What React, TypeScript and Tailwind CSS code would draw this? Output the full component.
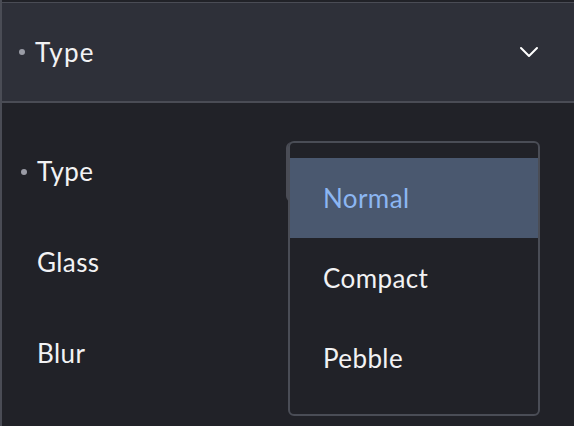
import { ChevronDown } from 'lucide-react';

const font = { fontFamily: 'Lato, "Noto Sans", sans-serif' };

const Dot = () => <span className="w-[6px] h-[6px] rounded-full bg-[#9a9ca6] mr-[10px]" />;

const Row = ({ label, dot }: { label: string; dot?: boolean }) => (
  <div className="h-[91px] flex items-center pl-[19px]">
    {dot ? <Dot /> : <span className="w-[16px]" />}
    <span className="text-[26px] tracking-[0.4px] text-[#f2f2f4]">{label}</span>
  </div>
);

export default function App() {
  const options = ['Normal', 'Compact', 'Pebble'];
  return (
    <div className="w-[574px] h-[426px] bg-[#212228] overflow-hidden relative" style={font}>
      <div className="h-full pt-[2px] border-l-2 border-[#4a4c55]">
        {/* Section header */}
        <div className="h-[101px] bg-[#2e3039] border-t border-b-2 border-[#4a4c55] flex items-center pl-[17px] pr-[29px]">
          <Dot />
          <span className="text-[26px] tracking-[1.2px] text-[#f2f2f4]">Type</span>
          <ChevronDown className="ml-auto text-white w-[32px] h-[32px]" strokeWidth={1.5} />
        </div>

        {/* Fields */}
        <div className="pt-[23px]">
          <Row label="Type" dot />
          <Row label="Glass" />
          <Row label="Blur" />
        </div>
      </div>

      {/* Trigger behind the open list */}
      <div className="absolute left-[286px] top-[142px] w-[20px] h-[60px] rounded-l-[6px] border-l-2 border-[#4a4c55]" />

      {/* Open list */}
      <div className="absolute left-[288px] top-[141px] w-[252px] h-[275px] rounded-[6px] border-2 border-[#4a4d56] bg-[#212228] pt-[15px]">
        {options.map((o, i) => (
          <div
            key={o}
            className={`h-[80px] flex items-center pl-[33px] text-[26px] tracking-[0.4px] ${
              i === 0 ? 'bg-[#4a586f] text-[#8cb6f2]' : 'text-[#f2f2f4]'
            }`}
          >
            {o}
          </div>
        ))}
      </div>
    </div>
  );
}
